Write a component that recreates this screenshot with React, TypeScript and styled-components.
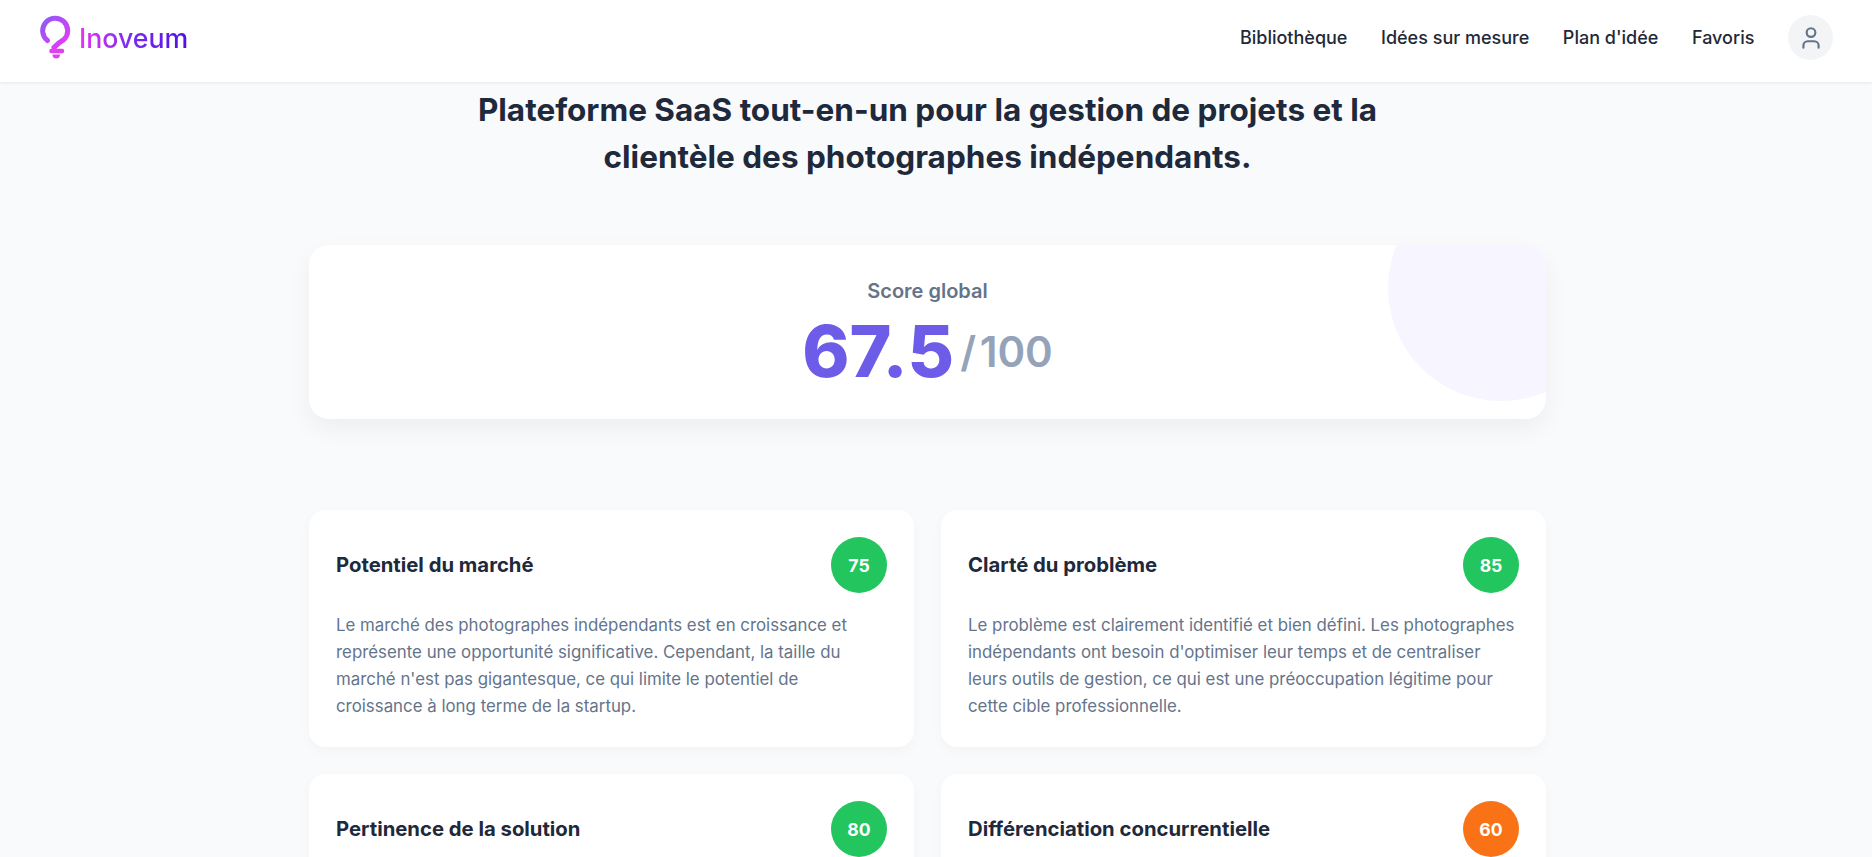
import React from 'react'
import styled, { createGlobalStyle } from 'styled-components'
import { User } from 'lucide-react'

const GlobalStyle = createGlobalStyle`
  html, body {
    margin: 0;
    height: 100%;
    overflow: hidden;
    background: #f9fafb;
    font-family: 'Inter', 'Liberation Sans', sans-serif;
  }
`

const Header = styled.header`
  height: 82px;
  box-sizing: border-box;
  padding: 0 39px 7px 40px;
  background: #fff;
  box-shadow: 0 1px 3px rgba(0, 0, 0, 0.08);
  display: flex;
  align-items: center;
  justify-content: space-between;
  position: relative;
`

const Logo = styled.div`
  display: flex;
  align-items: center;
  gap: 5px;
`

const LogoText = styled.span`
  font-size: 26.7px;
  font-weight: 500;
  background: linear-gradient(90deg, #e535f0, #7c2df0 45%, #4f0fe8);
  -webkit-background-clip: text;
  background-clip: text;
  color: transparent;
`

const Nav = styled.nav`
  display: flex;
  align-items: center;
  gap: 33.6px;
`

const NavLink = styled.a`
  font-size: 18px;
  font-weight: 500;
  color: #1f2937;
`

const Avatar = styled.div`
  width: 45px;
  height: 45px;
  border-radius: 50%;
  background: #f3f4f6;
  color: #64748b;
  display: flex;
  align-items: center;
  justify-content: center;
`

const Main = styled.main`
  width: 1237px;
  margin: 0 0 0 309px;
`

const Title = styled.h1`
  margin: 0 auto;
  padding-top: 4px;
  width: 920px;
  text-align: center;
  font-size: 31.5px;
  line-height: 47px;
  font-weight: 700;
  color: #1e293b;
`

const ScoreCard = styled.section`
  margin-top: 65px;
  height: 174px;
  border-radius: 20px;
  background: #fff;
  box-shadow: 0 10px 25px rgba(0, 0, 0, 0.05);
  position: relative;
  overflow: hidden;
  display: flex;
  flex-direction: column;
  align-items: center;
  padding-top: 32px;
  box-sizing: border-box;
`

const Blob = styled.div`
  position: absolute;
  width: 226px;
  height: 226px;
  top: -70px;
  right: -68px;
  border-radius: 50%;
  background: #f7f5ff;
`

const ScoreLabel = styled.div`
  font-size: 20px;
  line-height: 28px;
  font-weight: 600;
  color: #64748b;
`

const ScoreRow = styled.div`
  display: flex;
  align-items: center;
  gap: 6px;
  margin-top: 10px;
`

const ScoreValue = styled.span`
  font-size: 71.5px;
  line-height: 72px;
  font-weight: 800;
  color: #6c5ce7;
`

const ScoreMax = styled.span`
  font-size: 42px;
  font-weight: 600;
  word-spacing: -7px;
  color: #94a3b8;
`

const Grid = styled.div`
  margin-top: 91px;
  display: grid;
  grid-template-columns: 1fr 1fr;
  gap: 27px;
`

const Card = styled.article`
  min-height: 237px;
  box-sizing: border-box;
  padding: 27px 27px 26px;
  border-radius: 16px;
  background: #fff;
  box-shadow: 0 4px 12px rgba(0, 0, 0, 0.03);
`

const CardHead = styled.div`
  display: flex;
  align-items: center;
  justify-content: space-between;
  margin-bottom: 19px;
`

const CardTitle = styled.h3`
  margin: 0;
  font-size: 20.3px;
  line-height: 28px;
  font-weight: 700;
  color: #1e293b;
`

const Badge = styled.div<{ $tone: string }>`
  width: 56px;
  height: 56px;
  border-radius: 50%;
  background: ${({ $tone }) => $tone};
  color: #fff;
  font-size: 17.6px;
  font-weight: 700;
  display: flex;
  align-items: center;
  justify-content: center;
`

const CardText = styled.p`
  margin: 0;
  font-size: 16.85px;
  line-height: 27px;
  color: #64748b;
`

const GREEN = '#22c55e'
const ORANGE = '#f97316'

const criteria = [
  {
    title: 'Potentiel du marché',
    score: 75,
    tone: GREEN,
    text: "Le marché des photographes indépendants est en croissance et représente une opportunité significative. Cependant, la taille du marché n'est pas gigantesque, ce qui limite le potentiel de croissance à long terme de la startup.",
  },
  {
    title: 'Clarté du problème',
    score: 85,
    tone: GREEN,
    text: "Le problème est clairement identifié et bien défini. Les photographes indépendants ont besoin d'optimiser leur temps et de centraliser leurs outils de gestion, ce qui est une préoccupation légitime pour cette cible professionnelle.",
  },
  { title: 'Pertinence de la solution', score: 80, tone: GREEN, text: '' },
  { title: 'Différenciation concurrentielle', score: 60, tone: ORANGE, text: '' },
]

function LogoMark() {
  return (
    <svg width="34" height="46" viewBox="0 0 34 46" fill="none">
      <defs>
        <linearGradient id="bulb" x1="0" y1="0" x2="1" y2="1">
          <stop offset="0" stopColor="#8b5cf6" />
          <stop offset="1" stopColor="#ec38f5" />
        </linearGradient>
      </defs>
      <path
        d="M7.5 25.5 A12.5 12.5 0 1 1 24 24.5 Q18 28 14 32.5"
        stroke="url(#bulb)"
        strokeWidth="5"
        strokeLinecap="round"
      />
      <path d="M11.5 36 H22" stroke="#e040f0" strokeWidth="4.5" strokeLinecap="round" />
      <path d="M12.5 39.5 H20 A3.75 4 0 0 1 12.5 39.5 Z" fill="#e040f0" />
    </svg>
  )
}

export default function App() {
  return (
    <>
      <GlobalStyle />
      <Header>
        <Logo>
          <LogoMark />
          <LogoText>Inoveum</LogoText>
        </Logo>
        <Nav>
          <NavLink>Bibliothèque</NavLink>
          <NavLink>Idées sur mesure</NavLink>
          <NavLink>Plan d'idée</NavLink>
          <NavLink>Favoris</NavLink>
          <Avatar>
            <User size={26} strokeWidth={2} />
          </Avatar>
        </Nav>
      </Header>
      <Main>
        <Title>Plateforme SaaS tout-en-un pour la gestion de projets et la clientèle des photographes indépendants.</Title>
        <ScoreCard>
          <Blob />
          <ScoreLabel>Score global</ScoreLabel>
          <ScoreRow>
            <ScoreValue>67.5</ScoreValue>
            <ScoreMax>/ 100</ScoreMax>
          </ScoreRow>
        </ScoreCard>
        <Grid>
          {criteria.map((item) => (
            <Card key={item.title}>
              <CardHead>
                <CardTitle>{item.title}</CardTitle>
                <Badge $tone={item.tone}>{item.score}</Badge>
              </CardHead>
              <CardText>{item.text}</CardText>
            </Card>
          ))}
        </Grid>
      </Main>
    </>
  )
}
